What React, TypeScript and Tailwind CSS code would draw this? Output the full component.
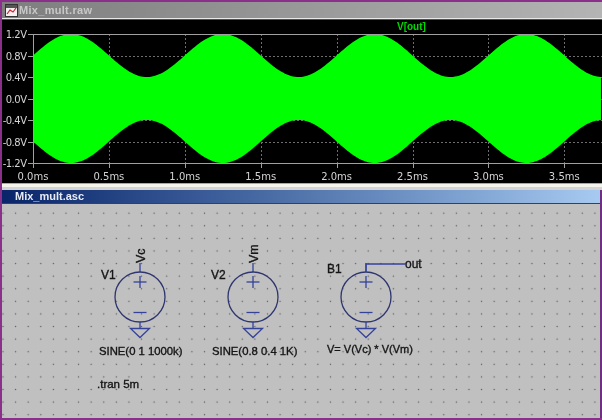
const xs = Array.from({ length: 8 }, (_, i) => 33 + i * 75.9);
const yv = (v: number) => 98.5 - v * 53.75;
const labelsY = ["1.2V", "0.8V", "0.4V", "0.0V", "-0.4V", "-0.8V", "-1.2V"];
const vals = [1.2, 0.8, 0.4, 0, -0.4, -0.8, -1.2];

function env() {
  const top: string[] = [];
  const bot: string[] = [];
  for (let x = 33; x <= 602; x += 2) {
    const t = (x - 33) / 151.8;
    const e = 0.8 + 0.4 * Math.sin(2 * Math.PI * t);
    top.push(`${x},${yv(e).toFixed(1)}`);
    bot.unshift(`${x},${yv(-e).toFixed(1)}`);
  }
  return top.concat(bot).join(" ");
}

function Source({ x, y }: { x: number; y: number }) {
  return (
    <g fill="none" stroke="#34429a" strokeWidth="1.3">
      <line x1={x} y1={y - 34} x2={x} y2={y - 25} />
      <circle cx={x} cy={y} r={25} stroke="#2e356f" />
      <line x1={x - 6.5} y1={y - 15} x2={x + 6.5} y2={y - 15} />
      <line x1={x} y1={y - 21} x2={x} y2={y - 9} />
      <line x1={x - 6.5} y1={y + 15.5} x2={x + 6.5} y2={y + 15.5} />
      <line x1={x} y1={y + 25} x2={x} y2={y + 31.5} />
      <path d={`M${x - 9.5} ${y + 31.5}H${x + 9.5}L${x} ${y + 40.5}Z`} />
    </g>
  );
}

const T = "#161616";

export default function App() {
  return (
    <div className="w-[602px] h-[420px] overflow-hidden flex flex-col bg-[#c0c0c0] border-t-2 border-l-2 border-b-2 border-[#8a2f8a] blur-[0.35px] font-['Liberation_Sans',sans-serif]">
      <div className="h-[16px] shrink-0 flex items-center gap-[1px] pl-[3px] bg-gradient-to-r from-[#7e7e7e] to-[#b4b4b4]">
        <svg width="13" height="13" viewBox="0 0 13 13" className="shrink-0">
          <rect x="0.5" y="0.5" width="12" height="12" fill="#f4f0f0" stroke="#333" />
          <rect x="1" y="1" width="11" height="3" fill="#555" />
          <path d="M2 10 L5 6 L8 8 L11 4" stroke="#d02030" strokeWidth="1.2" fill="none" />
        </svg>
        <span className="text-[11px] font-bold text-[#c8c8c8] tracking-[0.3px]">Mix_mult.raw</span>
      </div>
      <div className="h-[1px] shrink-0 bg-[#e8e8e8]" />
      <div className="h-[1px] shrink-0 bg-[#505050]" />
      <svg width="600" height="163" viewBox="2 20 600 163" className="shrink-0 block bg-black">
        <g stroke="#6e6e6e" strokeDasharray="2 2" strokeWidth="1">
          {xs.slice(1).map((x) => (
            <line key={x} x1={Math.round(x) + 0.5} y1={34} x2={Math.round(x) + 0.5} y2={163} />
          ))}
          {vals.slice(1, 6).map((v) => (
            <line key={v} x1={33} y1={Math.round(yv(v)) + 0.5} x2={602} y2={Math.round(yv(v)) + 0.5} />
          ))}
        </g>
        <polygon points={env()} fill="#00ff00" />
        <g stroke="#a0a0a0" strokeWidth="1">
          <line x1={33} y1={34.5} x2={602} y2={34.5} />
          <line x1={33} y1={163.5} x2={602} y2={163.5} />
          <line x1={33.5} y1={34} x2={33.5} y2={164} />
          {vals.map((v) => (
            <line key={v} x1={28} y1={Math.round(yv(v)) + 0.5} x2={33} y2={Math.round(yv(v)) + 0.5} />
          ))}
          {xs.map((x) => (
            <line key={x} x1={Math.round(x) + 0.5} y1={163} x2={Math.round(x) + 0.5} y2={168} />
          ))}
        </g>
        <g fill="#d4d4d4" fontSize="10" fontFamily="'DejaVu Sans',sans-serif">
          {labelsY.map((l, i) => (
            <text key={l} x={26.5} y={yv(vals[i]) + 4} textAnchor="end" letterSpacing="-0.5">{l}</text>
          ))}
          {xs.map((x, i) => (
            <text key={x} x={x} y={179.5} textAnchor="middle">{(i * 0.5).toFixed(1)}ms</text>
          ))}
        </g>
        <text x={397} y={30} fill="#00d800" fontSize="10" fontWeight="bold" fontFamily="'Liberation Sans',sans-serif">V[out]</text>
      </svg>
      <div className="h-[1px] shrink-0 bg-[#a8a8a8]" />
      <div className="h-[3px] shrink-0 bg-[#f4f4ec]" />
      <div className="h-[3px] shrink-0 bg-[#d4d4d4]" />
      <div className="flex-1 flex flex-col border-r-2 border-[#6e2f80]">
        <div className="h-[13px] shrink-0 flex items-center pl-[13px] bg-gradient-to-r from-[#0a246a] to-[#a6caf0]">
          <span className="text-[11px] font-bold text-[#e8ecf4]">Mix_mult.asc</span>
        </div>
        <div className="h-[1px] shrink-0 bg-[#404040]" />
        <div className="flex-1 bg-[#c0c0c0] bg-[radial-gradient(circle,#5e5e5e_0.8px,transparent_1px)] bg-[length:12.6px_12.6px] bg-[position:-5.3px_2.9px]">
          <svg width="598" height="214" viewBox="2 204 598 214" className="block">
            <Source x={140} y={297} />
            <Source x={253} y={297} />
            <Source x={366} y={297} />
            <path d="M366 272V264H405" fill="none" stroke="#34429a" strokeWidth="1.3" />
            <g fill={T} stroke={T} strokeWidth="0.35" fontSize="12" fontFamily="'Liberation Sans',sans-serif">
              <text x={101} y={279}>V1</text>
              <text x={211} y={279}>V2</text>
              <text x={327} y={273}>B1</text>
              <text x={405} y={268}>out</text>
              <text x={0} y={0} transform="translate(145 263) rotate(-90)" fontSize="12.5">Vc</text>
              <text x={0} y={0} transform="translate(257.5 263) rotate(-90)" fontSize="12.5">Vm</text>
              <text x={99} y={355} fontSize="11.3">SINE(0 1 1000k)</text>
              <text x={212} y={355} fontSize="11.3">SINE(0.8 0.4 1K)</text>
              <text x={327} y={353} fontSize="11">V= V(Vc) * V(Vm)</text>
              <text x={97} y={388} fontSize="11.5">.tran 5m</text>
            </g>
          </svg>
        </div>
      </div>
    </div>
  );
}
